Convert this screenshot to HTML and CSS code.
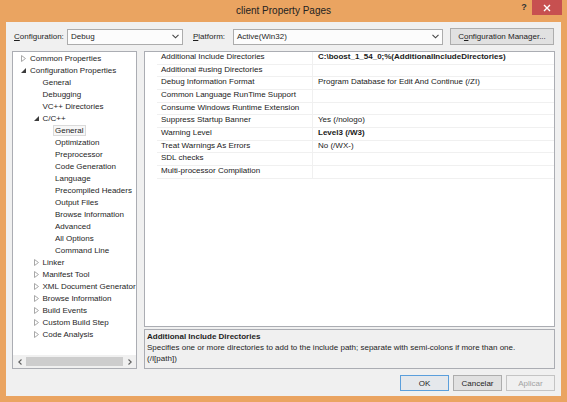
FILE: index.html
```html
<!DOCTYPE html>
<html>
<head>
<meta charset="utf-8">
<link rel="stylesheet" href="styles.css">
</head>
<body>
<div class="window">
  <div class="titlebar">
    <div class="tb-spacer"></div>
    <div class="title">client Property Pages</div>
    <div class="tb-controls">
      <span class="help">?</span>
      <span class="close"><svg width="8" height="8" viewBox="0 0 8 8"><path d="M1 1 L7 7 M7 1 L1 7" stroke="#fff" stroke-width="1.4"/></svg></span>
    </div>
  </div>
  <div class="client">
    <div class="toprow">
      <span class="lbl lbl1"><u>C</u>onfiguration:</span>
      <div class="combo combo1"><span>Debug</span><svg class="chev" width="7" height="5" viewBox="0 0 7 5"><path d="M0.5 0.8 L3.5 3.8 L6.5 0.8" fill="none" stroke="#444" stroke-width="1.1"/></svg></div>
      <span class="lbl lbl2"><u>P</u>latform:</span>
      <div class="combo combo2"><span>Active(Win32)</span><svg class="chev" width="7" height="5" viewBox="0 0 7 5"><path d="M0.5 0.8 L3.5 3.8 L6.5 0.8" fill="none" stroke="#444" stroke-width="1.1"/></svg></div>
      <div class="btn cfgmgr">C<u>o</u>nfiguration Manager...</div>
    </div>
    <div class="main">
      <div class="tree">
        <div class="tree-list">
          <div class="ti l0"><span class="arr"><svg width="5" height="7" viewBox="0 0 5 7"><path d="M0.5 0.5 L4.5 3.5 L0.5 6.5 Z" fill="none" stroke="#a8a8a8" stroke-width="1"/></svg></span><span class="tx">Common Properties</span></div>
          <div class="ti l0"><span class="arr"><svg width="5" height="5" viewBox="0 0 5 5"><path d="M5 0 L5 5 L0 5 Z" fill="#3c3c3c"/></svg></span><span class="tx">Configuration Properties</span></div>
          <div class="ti l1"><span class="arr"></span><span class="tx">General</span></div>
          <div class="ti l1"><span class="arr"></span><span class="tx">Debugging</span></div>
          <div class="ti l1"><span class="arr"></span><span class="tx">VC++ Directories</span></div>
          <div class="ti l1"><span class="arr"><svg width="5" height="5" viewBox="0 0 5 5"><path d="M5 0 L5 5 L0 5 Z" fill="#3c3c3c"/></svg></span><span class="tx">C/C++</span></div>
          <div class="ti l2"><span class="arr"></span><span class="tx sel">General</span></div>
          <div class="ti l2"><span class="arr"></span><span class="tx">Optimization</span></div>
          <div class="ti l2"><span class="arr"></span><span class="tx">Preprocessor</span></div>
          <div class="ti l2"><span class="arr"></span><span class="tx">Code Generation</span></div>
          <div class="ti l2"><span class="arr"></span><span class="tx">Language</span></div>
          <div class="ti l2"><span class="arr"></span><span class="tx">Precompiled Headers</span></div>
          <div class="ti l2"><span class="arr"></span><span class="tx">Output Files</span></div>
          <div class="ti l2"><span class="arr"></span><span class="tx">Browse Information</span></div>
          <div class="ti l2"><span class="arr"></span><span class="tx">Advanced</span></div>
          <div class="ti l2"><span class="arr"></span><span class="tx">All Options</span></div>
          <div class="ti l2"><span class="arr"></span><span class="tx">Command Line</span></div>
          <div class="ti l1"><span class="arr"><svg width="5" height="7" viewBox="0 0 5 7"><path d="M0.5 0.5 L4.5 3.5 L0.5 6.5 Z" fill="none" stroke="#a8a8a8" stroke-width="1"/></svg></span><span class="tx">Linker</span></div>
          <div class="ti l1"><span class="arr"><svg width="5" height="7" viewBox="0 0 5 7"><path d="M0.5 0.5 L4.5 3.5 L0.5 6.5 Z" fill="none" stroke="#a8a8a8" stroke-width="1"/></svg></span><span class="tx">Manifest Tool</span></div>
          <div class="ti l1"><span class="arr"><svg width="5" height="7" viewBox="0 0 5 7"><path d="M0.5 0.5 L4.5 3.5 L0.5 6.5 Z" fill="none" stroke="#a8a8a8" stroke-width="1"/></svg></span><span class="tx">XML Document Generator</span></div>
          <div class="ti l1"><span class="arr"><svg width="5" height="7" viewBox="0 0 5 7"><path d="M0.5 0.5 L4.5 3.5 L0.5 6.5 Z" fill="none" stroke="#a8a8a8" stroke-width="1"/></svg></span><span class="tx">Browse Information</span></div>
          <div class="ti l1"><span class="arr"><svg width="5" height="7" viewBox="0 0 5 7"><path d="M0.5 0.5 L4.5 3.5 L0.5 6.5 Z" fill="none" stroke="#a8a8a8" stroke-width="1"/></svg></span><span class="tx">Build Events</span></div>
          <div class="ti l1"><span class="arr"><svg width="5" height="7" viewBox="0 0 5 7"><path d="M0.5 0.5 L4.5 3.5 L0.5 6.5 Z" fill="none" stroke="#a8a8a8" stroke-width="1"/></svg></span><span class="tx">Custom Build Step</span></div>
          <div class="ti l1"><span class="arr"><svg width="5" height="7" viewBox="0 0 5 7"><path d="M0.5 0.5 L4.5 3.5 L0.5 6.5 Z" fill="none" stroke="#a8a8a8" stroke-width="1"/></svg></span><span class="tx">Code Analysis</span></div>
        </div>
        <div class="hscroll">
          <span class="sarrow"><svg width="4" height="6" viewBox="0 0 4 6"><path d="M3.5 0.5 L0.8 3 L3.5 5.5" fill="none" stroke="#606060" stroke-width="1.1"/></svg></span>
          <span class="thumb"></span>
          <span class="sarrow"><svg width="4" height="6" viewBox="0 0 4 6"><path d="M0.5 0.5 L3.2 3 L0.5 5.5" fill="none" stroke="#606060" stroke-width="1.1"/></svg></span>
        </div>
      </div>
      <div class="right">
        <div class="grid">
          <div class="row"><span class="gut"></span><span class="nm">Additional Include Directories</span><span class="vl b">C:\boost_1_54_0;%(AdditionalIncludeDirectories)</span></div>
          <div class="row"><span class="gut"></span><span class="nm">Additional #using Directories</span><span class="vl"></span></div>
          <div class="row"><span class="gut"></span><span class="nm">Debug Information Format</span><span class="vl">Program Database for Edit And Continue (/ZI)</span></div>
          <div class="row"><span class="gut"></span><span class="nm">Common Language RunTime Support</span><span class="vl"></span></div>
          <div class="row"><span class="gut"></span><span class="nm">Consume Windows Runtime Extension</span><span class="vl"></span></div>
          <div class="row"><span class="gut"></span><span class="nm">Suppress Startup Banner</span><span class="vl">Yes (/nologo)</span></div>
          <div class="row"><span class="gut"></span><span class="nm">Warning Level</span><span class="vl b">Level3 (/W3)</span></div>
          <div class="row"><span class="gut"></span><span class="nm">Treat Warnings As Errors</span><span class="vl">No (/WX-)</span></div>
          <div class="row"><span class="gut"></span><span class="nm">SDL checks</span><span class="vl"></span></div>
          <div class="row"><span class="gut"></span><span class="nm">Multi-processor Compilation</span><span class="vl"></span></div>
        </div>
        <div class="desc">
          <div class="desc-title">Additional Include Directories</div>
          <div>Specifies one or more directories to add to the include path; separate with semi-colons if more than one.</div>
          <div>(/I[path])</div>
        </div>
      </div>
    </div>
    <div class="buttons">
      <div class="btn dbtn default">OK</div>
      <div class="btn dbtn">Cancelar</div>
      <div class="btn dbtn disabled">Aplicar</div>
    </div>
  </div>
</div>
</body>
</html>
```

FILE: styles.css
```css
html, body {
  margin: 0;
  padding: 0;
}
body {
  font-family: "Liberation Sans", Arial, sans-serif;
  font-size: 8px;
  color: #1e1e1e;
}
.window {
  width: 567px;
  height: 402px;
  box-sizing: border-box;
  background: #eaa461;
  padding: 0 6px 6px 6px;
  display: flex;
  flex-direction: column;
}
.titlebar {
  height: 22px;
  display: grid;
  grid-template-columns: 1fr auto 1fr;
  flex: none;
}
.title {
  font-size: 10px;
  line-height: 21px;
  color: #222;
  text-align: center;
}
.tb-controls {
  display: flex;
  justify-content: flex-end;
  align-items: flex-start;
}
.help {
  font-size: 9px;
  font-weight: bold;
  color: #333;
  line-height: 15px;
  width: 14px;
  text-align: center;
  margin-right: 1px;
}
.close {
  width: 30px;
  height: 15px;
  background: #c75050;
  display: flex;
  align-items: center;
  justify-content: center;
  margin-right: -1px;
}
.client {
  flex: 1;
  background: #f0f0f0;
  padding: 6px 6px 0 6px;
  display: flex;
  flex-direction: column;
}
.toprow {
  display: flex;
  align-items: center;
  height: 17px;
}
.lbl {
  box-sizing: border-box;
  white-space: nowrap;
}
.lbl1 {
  width: 55px;
  padding-left: 2px;
}
.lbl2 {
  width: 40px;
  margin-left: 10px;
}
.combo {
  box-sizing: border-box;
  height: 16px;
  border: 1px solid #acacac;
  background: #fcfcfc;
  display: flex;
  align-items: center;
  justify-content: space-between;
  padding: 0 3px 0 3px;
}
.combo1 { width: 116px; }
.combo2 { width: 210px; }
.chev { display: block; }
.btn {
  box-sizing: border-box;
  border: 1px solid #adadad;
  background: #e1e1e1;
  display: flex;
  align-items: center;
  justify-content: center;
  white-space: nowrap;
}
.cfgmgr {
  width: 104px;
  height: 17px;
  margin-left: 7px;
}
.main {
  margin-top: 6px;
  height: 318px;
  display: flex;
  gap: 7px;
}
.tree {
  width: 125px;
  box-sizing: border-box;
  border: 1px solid #abadb3;
  background: #fff;
  display: flex;
  flex-direction: column;
}
.tree-list {
  flex: 1;
  overflow: hidden;
}
.ti {
  height: 12px;
  display: flex;
  align-items: center;
  white-space: nowrap;
}
.ti.l0 { padding-left: 5px; }
.ti.l1 { padding-left: 17.5px; }
.ti.l2 { padding-left: 30px; }
.arr {
  width: 12px;
  flex: none;
  display: flex;
  align-items: center;
  padding-left: 3px;
  box-sizing: border-box;
}
.arr svg { display: block; }
.tx {
  line-height: 11px;
}
.tx.sel {
  border: 1px solid #dadada;
  background: #f7f7f7;
  margin-left: -2px;
  padding: 0 2px 0 1px;
  line-height: 9px;
}
.hscroll {
  height: 13px;
  background: #f0f0f0;
  display: flex;
  align-items: center;
  flex: none;
}
.sarrow {
  width: 13px;
  display: flex;
  justify-content: center;
}
.thumb {
  flex: 1;
  height: 9px;
  background: #cdcdcd;
}
.right {
  flex: 1;
  display: flex;
  flex-direction: column;
  gap: 2px;
}
.grid {
  flex: 1;
  box-sizing: border-box;
  border: 1px solid #abadb3;
  background: #fff;
}
.row {
  display: grid;
  grid-template-columns: 12px 156px 1fr;
  height: 12.67px;
}
.gut {
  background: #fff;
}
.nm, .vl {
  border-bottom: 1px solid #f0f0f0;
  white-space: nowrap;
  overflow: hidden;
  line-height: 10px;
  color: #1a1a1a;
}
.nm {
  padding-left: 4px;
  border-right: 1px solid #f0f0f0;
}
.vl {
  padding-left: 5px;
}
.b { font-weight: bold; }
.desc {
  height: 40px;
  box-sizing: border-box;
  border: 1px solid #abadb3;
  background: #f0f0f0;
  padding: 1px 2px;
  line-height: 11px;
}
.desc-title { font-weight: bold; }
.buttons {
  margin-top: 6px;
  display: flex;
  justify-content: flex-end;
  gap: 4px;
}
.dbtn {
  width: 49px;
  height: 16px;
}
.default {
  border-color: #5b9fdc;
  background: #e5e8ec;
}
.disabled {
  border-color: #c4c4c4;
  background: #f0f0f0;
  color: #a2a2a2;
}
```
